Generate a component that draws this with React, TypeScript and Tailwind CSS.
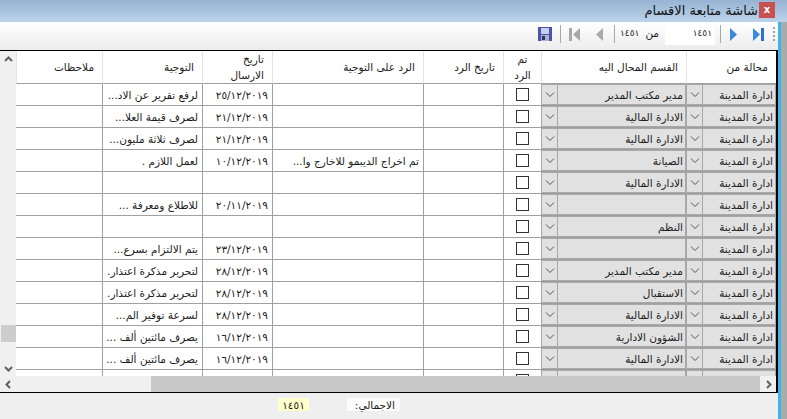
import React from "react";

const rows = [
  { dept: "مدير مكتب المدير", date: "٢٥/١٢/٢٠١٩", note: "لرفع تقرير عن الاد..." },
  { dept: "الادارة المالية", date: "٢١/١٢/٢٠١٩", note: "لصرف قيمة العلا..." },
  { dept: "الادارة المالية", date: "٢١/١٢/٢٠١٩", note: "لصرف ثلاثة مليون..." },
  { dept: "الصيانة", date: "١٠/١٢/٢٠١٩", note: "لعمل اللازم .", reply: "تم اخراج الديبمو للاخارج وا..." },
  { dept: "الادارة المالية", date: "", note: "" },
  { dept: "", date: "٢٠/١١/٢٠١٩", note: "للاطلاع ومعرفة ..." },
  { dept: "النظم", date: "", note: "" },
  { dept: "", date: "٢٣/١٢/٢٠١٩", note: "يتم الالتزام بسرع..." },
  { dept: "مدير مكتب المدير", date: "٢٨/١٢/٢٠١٩", note: "لتحرير مذكرة اعتذار." },
  { dept: "الاستقبال", date: "٢٨/١٢/٢٠١٩", note: "لتحرير مذكرة اعتذار." },
  { dept: "الادارة المالية", date: "٢٨/١٢/٢٠١٩", note: "لسرعة توفير الم..." },
  { dept: "الشؤون الادارية", date: "١٦/١٢/٢٠١٩", note: "يصرف مائتين ألف ..." },
  { dept: "الادارة المالية", date: "١٦/١٢/٢٠١٩", note: "يصرف مائتين ألف ..." },
];

const headers = [
  { label: "محالة من", cls: "pr-2" },
  { label: "القسم المحال اليه", cls: "pr-2" },
  { label: "تم الرد", cls: "justify-center text-center px-2" },
  { label: "تاريخ الرد", cls: "pr-2" },
  { label: "الرد على التوجية", cls: "pr-2" },
  { label: "تاريخ الارسال", cls: "pr-2 pl-4" },
  { label: "التوجية", cls: "pr-2" },
  { label: "ملاحظات", cls: "pr-2" },
];

function Chevron() {
  return (
    <svg width="10" height="6" viewBox="0 0 10 6" fill="none" stroke="#555" strokeWidth="1">
      <path d="M1 0.5 L5 4.5 L9 0.5" />
    </svg>
  );
}

function Combo({ text }: { text?: string }) {
  return (
    <div className="h-[22px] border-b border-[#a0a0a0] bg-[#a8a8a8] p-px">
      <div className="flex h-full bg-[#e1e1e1]">
        <div className="flex-1 overflow-hidden whitespace-nowrap pr-[2px] leading-[20px]">{text}</div>
        <div className="flex w-[16px] shrink-0 items-center justify-center border-r border-[#a8a8a8]">
          <Chevron />
        </div>
      </div>
    </div>
  );
}

function Cell({ children, last }: { children?: React.ReactNode; last?: boolean }) {
  return (
    <div
      className={`h-[22px] overflow-hidden whitespace-nowrap border-b border-[#a0a0a0] pr-[4px] leading-[22px] ${
        last ? "" : "border-l"
      }`}
    >
      {children}
    </div>
  );
}

function Sep() {
  return <div className="h-[18px] w-px bg-[#a9a9a9]" />;
}

function ScrollArrow({ d }: { d: string }) {
  return (
    <svg width="9" height="9" viewBox="0 0 9 9" fill="none" stroke="#606060" strokeWidth="2">
      <path d={d} />
    </svg>
  );
}

export default function App() {
  return (
    <div
      dir="rtl"
      className="flex h-[419px] w-[787px] flex-col overflow-hidden bg-white text-[10.5px] text-[#1c1c1c]"
      style={{ fontFamily: '"DejaVu Sans", sans-serif' }}
    >
      {/* title bar */}
      <div className="flex h-[22px] shrink-0 items-start bg-gradient-to-b from-[#97b3d3] to-[#bcd4ea] pr-[12px] pt-[2px]">
        <div className="flex h-[16px] w-[16px] items-center justify-center bg-[#c75050] text-[10px] font-bold leading-none text-white">
          x
        </div>
        <div className="mr-[1px] text-[13px] leading-[18px] text-[#111]">شاشة متابعة الاقسام</div>
      </div>

      <div className="flex min-h-0 flex-1">
        <div className="w-[6px] shrink-0 bg-[#ababab]" />
        <div className="w-[3px] shrink-0 bg-[#3fb4e8]" />

        <div className="flex w-[778px] shrink-0 flex-col bg-[#efefef]">
          {/* toolbar */}
          <div className="flex h-[28px] shrink-0 items-center bg-gradient-to-b from-white to-[#ececec] pb-[4px]">
            <div className="mr-[3px] flex w-[2px] flex-col gap-[2px]">
              <span className="h-[2px] bg-[#a0a0a0]" />
              <span className="h-[2px] bg-[#a0a0a0]" />
              <span className="h-[2px] bg-[#a0a0a0]" />
              <span className="h-[2px] bg-[#a0a0a0]" />
            </div>
            <svg className="mr-[9px]" width="11" height="13" viewBox="0 0 11 13">
              <rect x="8" y="0" width="3" height="13" fill="#2f6fd0" />
              <path d="M0 0 L7 6.5 L0 13 Z" fill="#3f86e0" />
            </svg>
            <svg className="mr-[16px]" width="7" height="13" viewBox="0 0 7 13">
              <path d="M0 0 L7 6.5 L0 13 Z" fill="#3f86e0" />
            </svg>
            <div className="mr-[9px]">
              <Sep />
            </div>
            <div className="mr-[5px] flex h-[22px] w-[50px] items-center bg-white pr-[3px] text-[9px] tracking-[-0.5px]">
              ١٤٥١
            </div>
            <div className="mr-[6px]">من</div>
            <div className="mr-[6px] text-[9px] tracking-[-0.5px]">١٤٥١</div>
            <div className="mr-[5px]">
              <Sep />
            </div>
            <svg className="mr-[11px]" width="7" height="13" viewBox="0 0 7 13">
              <path d="M7 0 L0 6.5 L7 13 Z" fill="#a8a8a8" />
            </svg>
            <svg className="mr-[16px]" width="11" height="13" viewBox="0 0 11 13">
              <rect x="0" y="0" width="3" height="13" fill="#a8a8a8" />
              <path d="M11 0 L4 6.5 L11 13 Z" fill="#a8a8a8" />
            </svg>
            <div className="mr-[8px]">
              <Sep />
            </div>
            <svg className="mr-[8px]" width="14" height="14" viewBox="0 0 14 14">
              <rect width="14" height="14" fill="#4a54b0" />
              <rect x="3" y="1" width="8" height="6" fill="#c8d0ee" />
              <rect x="3" y="8" width="8" height="6" fill="#b0b4c4" />
              <rect x="4" y="9" width="3" height="4" fill="#30307a" />
            </svg>
          </div>

          {/* grid */}
          <div className="flex h-[343px] shrink-0 flex-col border-y border-r-2 border-black bg-white">
            <div className="flex min-h-0 flex-1">
              <div className="min-h-0 w-[760px] shrink-0 overflow-hidden">
                <div className="grid grid-cols-[90px_145px_38px_80px_151px_70px_100px_86px]">
                  {headers.map((h) => (
                    <div
                      key={h.label}
                      className={`flex h-[33px] items-center border-b border-l border-b-[#a0a0a0] border-l-[#e4e4e4] leading-[16px] ${h.cls}`}
                    >
                      {h.label}
                    </div>
                  ))}
                  {rows.map((r, i) => (
                    <React.Fragment key={i}>
                      <Combo text="ادارة المدينة" />
                      <Combo text={r.dept} />
                      <div className="flex h-[22px] items-center justify-center border-b border-l border-[#a0a0a0]">
                        <div className="h-[13px] w-[13px] border border-[#333] bg-white" />
                      </div>
                      <Cell />
                      <Cell>{r.reply}</Cell>
                      <Cell>
                        <div dir="ltr" className="text-right">
                          {r.date}
                        </div>
                      </Cell>
                      <Cell>{r.note}</Cell>
                      <Cell last />
                    </React.Fragment>
                  ))}
                  {/* row cut off by the scrollbar */}
                  <Combo />
                  <Combo />
                  <div className="flex h-[22px] items-center justify-center border-b border-l border-[#a0a0a0]">
                    <div className="h-[13px] w-[13px] border border-[#333] bg-white" />
                  </div>
                  <Cell />
                  <Cell />
                  <Cell />
                  <Cell />
                  <Cell last />
                </div>
              </div>
              {/* vertical scrollbar */}
              <div className="flex w-[16px] shrink-0 flex-col bg-[#f0f0f0]">
                <div className="flex h-[16px] items-center justify-center">
                  <ScrollArrow d="M1 6 L4.5 2.5 L8 6" />
                </div>
                <div className="flex-1" />
                <div className="mb-[18px] h-[17px] w-[15px] bg-[#cdcdcd]" />
                <div className="flex h-[16px] items-center justify-center">
                  <ScrollArrow d="M1 3 L4.5 6.5 L8 3" />
                </div>
              </div>
            </div>
            {/* horizontal scrollbar */}
            <div className="flex h-[16px] shrink-0 bg-[#f0f0f0]">
              <div className="flex w-[16px] items-center justify-center">
                <ScrollArrow d="M3 1 L6.5 4.5 L3 8" />
              </div>
              <div className="w-[609px] bg-[#c8c8c8]" />
              <div className="flex-1" />
              <div className="flex w-[16px] items-center justify-center">
                <ScrollArrow d="M6 1 L2.5 4.5 L6 8" />
              </div>
            </div>
          </div>

          {/* footer */}
          <div className="flex flex-1 items-start pr-[378px] pt-[5px]">
            <div className="h-[13px] w-[53px] bg-[#fcfcfc] pr-[5px] leading-[14px]">الاجمالي:</div>
            <div className="mr-[38px] h-[13px] w-[31px] bg-[#ffffcc] text-center leading-[14px]">١٤٥١</div>
          </div>
        </div>
      </div>
    </div>
  );
}
